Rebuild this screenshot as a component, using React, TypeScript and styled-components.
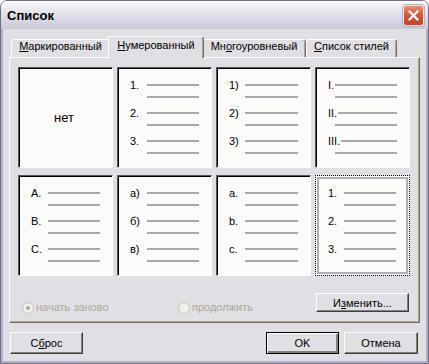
import styled, { createGlobalStyle } from 'styled-components';

const GlobalStyle = createGlobalStyle`
  html, body {
    margin: 0;
    padding: 0;
    background: #ffffff;
  }
  body {
    font-family: "Liberation Sans", Arial, sans-serif;
    font-size: 11px;
    color: #000;
  }
`;

type Marker = { n: string; w?: number };

const numbered: Marker[] = [{ n: '1.' }, { n: '2.' }, { n: '3.' }];
const paren: Marker[] = [{ n: '1)' }, { n: '2)' }, { n: '3)' }];
const upper: Marker[] = [{ n: 'A.' }, { n: 'B.' }, { n: 'C.' }];
const cyr: Marker[] = [{ n: 'а)' }, { n: 'б)' }, { n: 'в)' }];
const lower: Marker[] = [{ n: 'a.' }, { n: 'b.' }, { n: 'c.' }];
const roman = ['I.', 'II.', 'III.'];

const ListPreview = ({ items, numWidth = 17 }: { items: Marker[]; numWidth?: number }) => (
  <>
    {items.map((it) => (
      <Item key={it.n}>
        <Row>
          <Num $w={numWidth}>{it.n}</Num>
          <Line />
        </Row>
        <Row $indent={numWidth}>
          <Line />
        </Row>
      </Item>
    ))}
  </>
);

const App = () => {
  return (
    <>
      <GlobalStyle />
      <Window>
        <TitleBar>
          <Title>Список</Title>
          <CloseButton>
            <svg width="11" height="11" viewBox="0 0 11 11">
              <path d="M1.5 1.5 L9.5 9.5 M9.5 1.5 L1.5 9.5" stroke="#fff" strokeWidth="2.2" strokeLinecap="square" />
            </svg>
          </CloseButton>
        </TitleBar>

        <Body>
          <TabRow>
            <Tab $w={99}>
              <U>М</U>аркированный
            </Tab>
            <Tab $w={92} $active>
              <U>Н</U>умерованный
            </Tab>
            <Tab $w={104}>
              Мн<U>о</U>гоуровневый
            </Tab>
            <Tab $w={91}>
              <U>С</U>писок стилей
            </Tab>
          </TabRow>

          <Panel>
            <Grid>
              <Cell $center>
                <NoneLabel>нет</NoneLabel>
              </Cell>
              <Cell>
                <ListPreview items={numbered} />
              </Cell>
              <Cell>
                <ListPreview items={paren} numWidth={16} />
              </Cell>
              <Cell>
                {roman.map((r) => (
                  <Item key={r}>
                    <Row>
                      <Num>{r}</Num>
                      <Line />
                    </Row>
                    <Row $indent={7}>
                      <Line />
                    </Row>
                  </Item>
                ))}
              </Cell>
              <Cell>
                <ListPreview items={upper} />
              </Cell>
              <Cell>
                <ListPreview items={cyr} />
              </Cell>
              <Cell>
                <ListPreview items={lower} numWidth={16} />
              </Cell>
              <Cell $selected>
                <ListPreview items={numbered} numWidth={16} />
              </Cell>
            </Grid>

            <Controls>
              <RadioOption $w={156}>
                <Radio $checked />
                <RadioLabel>начать заново</RadioLabel>
              </RadioOption>
              <RadioOption>
                <Radio />
                <RadioLabel>продолжить</RadioLabel>
              </RadioOption>
              <Spacer />
              <Button $w={93} $h={19}>
                И<U>з</U>менить...
              </Button>
            </Controls>
          </Panel>

          <Footer>
            <Button $w={73} $h={22}>
              С<U>б</U>рос
            </Button>
            <Spacer />
            <Button $w={73} $h={22} $default>
              OK
            </Button>
            <Button $w={74} $h={22}>
              Отмена
            </Button>
          </Footer>
        </Body>
      </Window>
    </>
  );
};

export default App;

const Window = styled.div`
  width: 429px;
  height: 364px;
  box-sizing: border-box;
  border: 1px solid #6e6d8a;
  border-radius: 7px 7px 0 0;
  background: #e0dfe3;
  display: flex;
  flex-direction: column;
  overflow: hidden;
`;

const TitleBar = styled.div`
  height: 28px;
  flex: none;
  display: flex;
  align-items: center;
  justify-content: space-between;
  padding: 0 4px 0 6px;
  background: linear-gradient(
    to bottom,
    #fdfdfe 0%,
    #eeeef3 20%,
    #dcdde6 55%,
    #c9cad8 100%
  );
  box-shadow: inset 0 1px #ffffff;
`;

const Title = styled.div`
  font-family: "Liberation Sans", Arial, sans-serif;
  font-weight: bold;
  font-size: 13px;
  color: #000;
  padding-top: 1px;
`;

const CloseButton = styled.div`
  width: 21px;
  height: 21px;
  box-sizing: border-box;
  border: 1px solid #f4e2dc;
  border-radius: 3px;
  background: linear-gradient(to bottom, #e88f78 0%, #d55a3f 45%, #c2412a 100%);
  box-shadow: 0 0 0 1px #b4b3c4;
  display: flex;
  align-items: center;
  justify-content: center;
`;

const Body = styled.div`
  flex: 1;
  display: flex;
  flex-direction: column;
  border: 2px solid #b2b1c6;
  border-top: none;
  padding: 7px 6px 0 6px;
`;

const TabRow = styled.div`
  display: flex;
  align-items: flex-end;
  height: 21px;
  padding-left: 2px;
  position: relative;
  z-index: 1;
`;

const Tab = styled.div<{ $w: number; $active?: boolean }>`
  box-sizing: border-box;
  width: ${(p) => p.$w + (p.$active ? 4 : 0)}px;
  height: ${(p) => (p.$active ? 22 : 18)}px;
  margin: ${(p) => (p.$active ? '0 -2px -1px' : '0')};
  position: relative;
  z-index: ${(p) => (p.$active ? 2 : 0)};
  border: 1px solid;
  border-bottom: none;
  border-color: #ffffff #716f64 transparent #ffffff;
  border-radius: 3px 3px 0 0;
  box-shadow: inset -1px 0 #aca899;
  background: #e0dfe3;
  display: flex;
  justify-content: center;
  padding-top: ${(p) => (p.$active ? 2 : 0)}px;
  font-size: 11px;
  line-height: 13px;
  white-space: nowrap;
`;

const U = styled.span`
  text-decoration: underline;
`;

const Panel = styled.div`
  height: 266px;
  flex: none;
  box-sizing: border-box;
  border: 1px solid;
  border-color: #ffffff #716f64 #716f64 #ffffff;
  box-shadow: inset -1px -1px #aca899;
  padding: 9px 0 0 8px;
  display: flex;
  flex-direction: column;
`;

const Grid = styled.div`
  display: grid;
  grid-template-columns: repeat(4, 95px);
  grid-template-rows: repeat(2, 101px);
  column-gap: 4px;
  row-gap: 7px;
`;

const Cell = styled.div<{ $selected?: boolean; $center?: boolean }>`
  box-sizing: border-box;
  background: #fbfcf9;
  border-style: solid;
  border-width: 1px;
  border-color: #57565c #ffffff #ffffff #57565c;
  box-shadow: inset 1px 1px #000000;
  padding: 11px 12px 0 12px;
  display: flex;
  flex-direction: column;
  ${(p) =>
    p.$center &&
    `
    align-items: center;
    justify-content: center;
    padding: 0;
  `}
  ${(p) =>
    p.$selected &&
    `
    border: 1px dotted #000000;
    box-shadow: inset 0 0 0 1px #fbfcf9, inset 0 0 0 3px #aeadb8;
    padding: 11px 13px 0 12px;
  `}
`;

const NoneLabel = styled.span`
  font-size: 13px;
  color: #000;
  margin-right: 3px;
`;

const Item = styled.div`
  margin-bottom: 4px;
`;

const Row = styled.div<{ $indent?: number }>`
  display: flex;
  align-items: center;
  height: 12px;
  padding-left: ${(p) => p.$indent ?? 0}px;
`;

const Num = styled.span<{ $w?: number }>`
  flex: none;
  width: ${(p) => (p.$w ? `${p.$w}px` : 'auto')};
  padding-right: ${(p) => (p.$w ? 0 : 1)}px;
  font-size: 11px;
  line-height: 12px;
  color: #000;
`;

const Line = styled.div`
  flex: 1;
  height: 2px;
  background: #a9a9ab;
`;

const Controls = styled.div`
  display: flex;
  align-items: flex-end;
  height: 19px;
  margin-top: 17px;
  padding: 0 10px 0 4px;
`;

const RadioOption = styled.div<{ $w?: number }>`
  display: flex;
  align-items: center;
  width: ${(p) => (p.$w ? `${p.$w}px` : 'auto')};
  margin-bottom: -2px;
  gap: 2px;
`;

const Radio = styled.span<{ $checked?: boolean }>`
  width: 12px;
  height: 12px;
  box-sizing: border-box;
  border-radius: 50%;
  border: 1px solid #c9c7ba;
  background: radial-gradient(circle at 60% 60%, #f7f6f1 0%, #e8e7e0 100%);
  display: flex;
  align-items: center;
  justify-content: center;
  &::after {
    content: '';
    display: ${(p) => (p.$checked ? 'block' : 'none')};
    width: 4px;
    height: 4px;
    border-radius: 50%;
    background: #a8a7a0;
  }
`;

const RadioLabel = styled.span`
  font-size: 11px;
  line-height: 13px;
  color: #aca899;
`;

const Spacer = styled.div`
  flex: 1;
`;

const Button = styled.button<{ $w: number; $h: number; $default?: boolean }>`
  width: ${(p) => p.$w}px;
  height: ${(p) => p.$h}px;
  box-sizing: border-box;
  flex: none;
  padding: 0;
  font-family: "Liberation Sans", Arial, sans-serif;
  font-size: 11px;
  color: #000;
  background: #e0dfe3;
  border: 1px solid;
  border-color: #ffffff #404040 #404040 #ffffff;
  box-shadow: inset -1px -1px #808080;
  ${(p) =>
    p.$default &&
    `
    border: 1px solid #000000;
    box-shadow: inset 1px 1px #ffffff, inset -2px -2px #808080;
  `}
`;

const Footer = styled.div`
  display: flex;
  gap: 5px;
  margin-top: 9px;
  padding: 0 2px 0 1px;
`;
